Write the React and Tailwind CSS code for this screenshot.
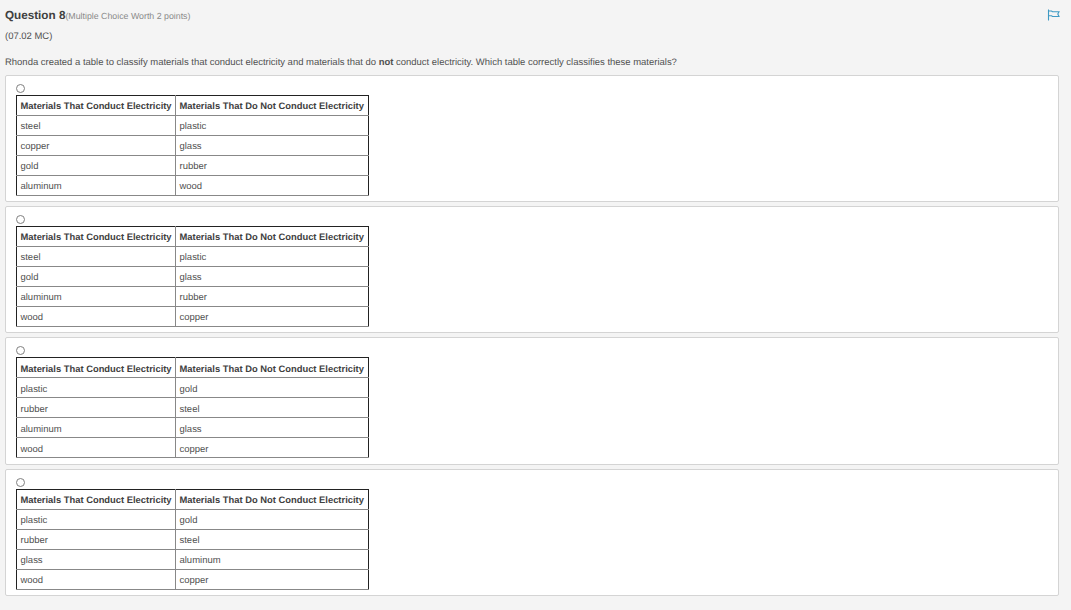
import React from "react";

const options = [
  [["steel", "plastic"], ["copper", "glass"], ["gold", "rubber"], ["aluminum", "wood"]],
  [["steel", "plastic"], ["gold", "glass"], ["aluminum", "rubber"], ["wood", "copper"]],
  [["plastic", "gold"], ["rubber", "steel"], ["aluminum", "glass"], ["wood", "copper"]],
  [["plastic", "gold"], ["rubber", "steel"], ["glass", "aluminum"], ["wood", "copper"]],
];

const Option = ({ rows }) => (
  <div className="h-[127.33px] border border-[#d4d4d4] bg-white rounded-[2px] pl-[10px] pt-[7px] mb-[4px]">
    <div className="h-[11px] flex items-center">
      <span className="w-[9px] h-[9px] rounded-full border border-[#808080] bg-white block" />
    </div>
    <table className="w-[353px] mt-[1px] border-collapse border border-[#222] table-fixed text-[9.47px] text-[#505050]">
      <thead>
        <tr className="h-[20px]">
          <th className="w-[159px] border border-r-[#888] border-b-[#888] border-[#222] pl-[3.5px] pt-[2px] text-left text-[9.38px] font-bold text-[#404040] whitespace-nowrap">
            Materials That Conduct Electricity
          </th>
          <th className="border border-b-[#888] border-[#222] pl-[3.5px] pt-[2px] text-left text-[9.38px] font-bold text-[#404040] whitespace-nowrap">
            Materials That Do Not Conduct Electricity
          </th>
        </tr>
      </thead>
      <tbody>
        {rows.map((r, i) => (
          <tr key={i} className="h-[20px]">
            <td className="border border-[#888] border-l-[#222] pl-[3.5px] pt-[4px]">{r[0]}</td>
            <td className="border border-[#888] border-r-[#222] pl-[3.5px] pt-[4px]">{r[1]}</td>
          </tr>
        ))}
      </tbody>
    </table>
  </div>
);

export default function App() {
  return (
    <div className="w-[1071px] h-[610px] overflow-hidden bg-[#f4f4f4] font-['Liberation_Sans',Arial,sans-serif] text-[#505050] [text-rendering:geometricPrecision] px-[5px] pt-[7px]">
      <div className="flex items-baseline justify-between h-[15px] pr-[6px]">
        <div className="flex items-baseline">
          <span className="text-[11.7px] font-bold text-[#404040]">Question 8</span>
          <span className="text-[8.8px] text-[#8a8a8a]">(Multiple Choice Worth 2 points)</span>
        </div>
        <svg width="13" height="12" viewBox="0 0 13 12" fill="none" stroke="#3f9ac4" strokeWidth="1.1" className="self-center">
          <path d="M1.5 0.5V11.5" />
          <path d="M1.5 2H4.5L5.5 2.8H12L10.8 5L12 7.5H5.5L4.5 6.7H1.5" />
        </svg>
      </div>
      <p className="text-[9.47px] mt-[9px] h-[12px] leading-[12px]">(07.02 MC)</p>
      <p className="text-[9.47px] mt-[14px] h-[12px] leading-[12px]">
        Rhonda created a table to classify materials that conduct electricity and materials that do <b>not</b> conduct electricity. Which table correctly classifies these materials?
      </p>
      <div className="w-[1054px] mt-[5.7px]">
        {options.map((rows, i) => (
          <Option key={i} rows={rows} />
        ))}
      </div>
    </div>
  );
}
